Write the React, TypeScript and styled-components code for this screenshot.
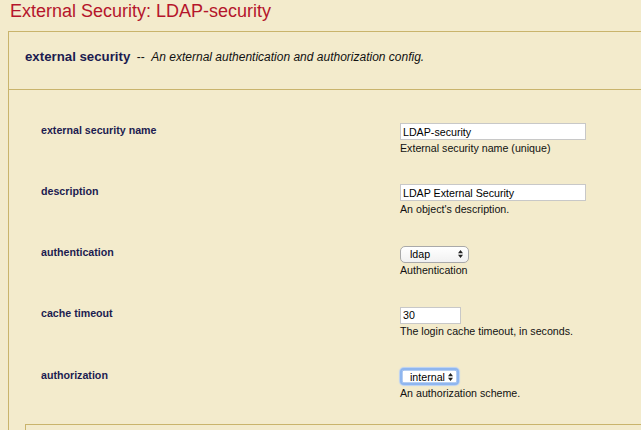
import React from "react";
import styled, { createGlobalStyle, css } from "styled-components";

const Global = createGlobalStyle`
  html, body {
    margin: 0;
    padding: 0;
    background: #f3ebcc;
    overflow: hidden;
  }
  body {
    font-family: "Liberation Sans", Arial, sans-serif;
  }
`;

const Page = styled.div`
  height: 430px;
  overflow: hidden;
`;

const Title = styled.h1`
  margin: 0;
  padding: 1px 0 0 10px;
  font-size: 18px;
  line-height: 21px;
  font-weight: normal;
  color: #b5152b;
`;

const Panel = styled.section`
  margin: 9px 0 0 8px;
  border-top: 1px solid #c9b46c;
  border-left: 1px solid #c9b46c;
`;

const Header = styled.div`
  height: 40px;
  padding: 17px 0 0 16px;
  border-bottom: 1px solid #c9b46c;
  font-size: 12px;
  color: #111;
  white-space: nowrap;
`;

const HeaderName = styled.b`
  font-size: 13.25px;
  color: #1c1c50;
`;

const Dashes = styled.span`
  margin: 0 6.5px;
`;

const HeaderDesc = styled.i``;

const FieldList = styled.div`
  display: flex;
  flex-direction: column;
  gap: 30.8px;
  padding: 33px 0 0 32px;
`;

const Row = styled.div`
  display: grid;
  grid-template-columns: 359px 1fr;
  align-items: start;
`;

const Label = styled.div`
  font-size: 10.67px;
  font-weight: bold;
  color: #1c1c50;
  padding-top: 0.5px;
`;

const Field = styled.div`
  display: flex;
  flex-direction: column;
  align-items: flex-start;
`;

const TextInput = styled.input<{ $w: number }>`
  box-sizing: border-box;
  width: ${(p) => p.$w}px;
  height: 17px;
  margin: 0;
  padding: 0 2px;
  border: 1px solid #c8c8c8;
  background: #fff;
  font-family: "Liberation Sans", Arial, sans-serif;
  font-size: 10.67px;
  color: #000;
  outline: none;
`;

const SelectWrap = styled.div`
  position: relative;
  display: inline-flex;
`;

const Select = styled.select<{ $w: number; $focused?: boolean }>`
  appearance: none;
  -webkit-appearance: none;
  box-sizing: border-box;
  width: ${(p) => p.$w}px;
  height: 17px;
  margin: 0;
  padding: 0 0 0 9px;
  border: 1px solid #a9a9a9;
  border-radius: 5px;
  background: linear-gradient(#ffffff, #f1f1f1);
  font-family: "Liberation Sans", Arial, sans-serif;
  font-size: 10.67px;
  color: #000;
  outline: none;
  ${(p) =>
    p.$focused &&
    css`
      border: 2px solid #8fb6ef;
      border-radius: 4px;
      padding-left: 8px;
      box-shadow: 0 0 1px 1px #b9d1f5, inset 0 0 0 0.5px #6d9de4;
      background: #fff;
    `}
`;

const Arrows = styled.svg`
  position: absolute;
  right: 6px;
  top: 50%;
  transform: translateY(-50%);
  pointer-events: none;
`;

const Help = styled.div`
  margin-top: 1.5px;
  font-size: 10.67px;
  color: #111;
`;

const SubPanel = styled.div`
  margin: 25.5px 0 0 16px;
  height: 30px;
  border-top: 1px solid #c9b46c;
  border-left: 1px solid #c9b46c;
`;

const SelectArrows = () => (
  <Arrows width="5" height="8" viewBox="0 0 5 8">
    <path d="M2.5 0 L5 3.2 L0 3.2 Z M0 4.8 L5 4.8 L2.5 8 Z" fill="#222" />
  </Arrows>
);

export default function App() {
  return (
    <Page>
      <Global />
      <Title>External Security: LDAP-security</Title>
      <Panel>
        <Header>
          <HeaderName>external security</HeaderName>
          <Dashes>--</Dashes>
          <HeaderDesc>An external authentication and authorization config.</HeaderDesc>
        </Header>
        <FieldList>
          <Row>
            <Label>external security name</Label>
            <Field>
              <TextInput $w={186} defaultValue="LDAP-security" />
              <Help>External security name (unique)</Help>
            </Field>
          </Row>
          <Row>
            <Label>description</Label>
            <Field>
              <TextInput $w={186} defaultValue="LDAP External Security" />
              <Help>An object's description.</Help>
            </Field>
          </Row>
          <Row>
            <Label>authentication</Label>
            <Field>
              <SelectWrap>
                <Select $w={69} defaultValue="ldap">
                  <option value="ldap">ldap</option>
                  <option value="internal">internal</option>
                </Select>
                <SelectArrows />
              </SelectWrap>
              <Help>Authentication</Help>
            </Field>
          </Row>
          <Row>
            <Label>cache timeout</Label>
            <Field>
              <TextInput $w={61} defaultValue="30" />
              <Help>The login cache timeout, in seconds.</Help>
            </Field>
          </Row>
          <Row>
            <Label>authorization</Label>
            <Field>
              <SelectWrap>
                <Select $w={59} $focused defaultValue="internal">
                  <option value="internal">internal</option>
                </Select>
                <SelectArrows />
              </SelectWrap>
              <Help>An authorization scheme.</Help>
            </Field>
          </Row>
        </FieldList>
        <SubPanel />
      </Panel>
    </Page>
  );
}
